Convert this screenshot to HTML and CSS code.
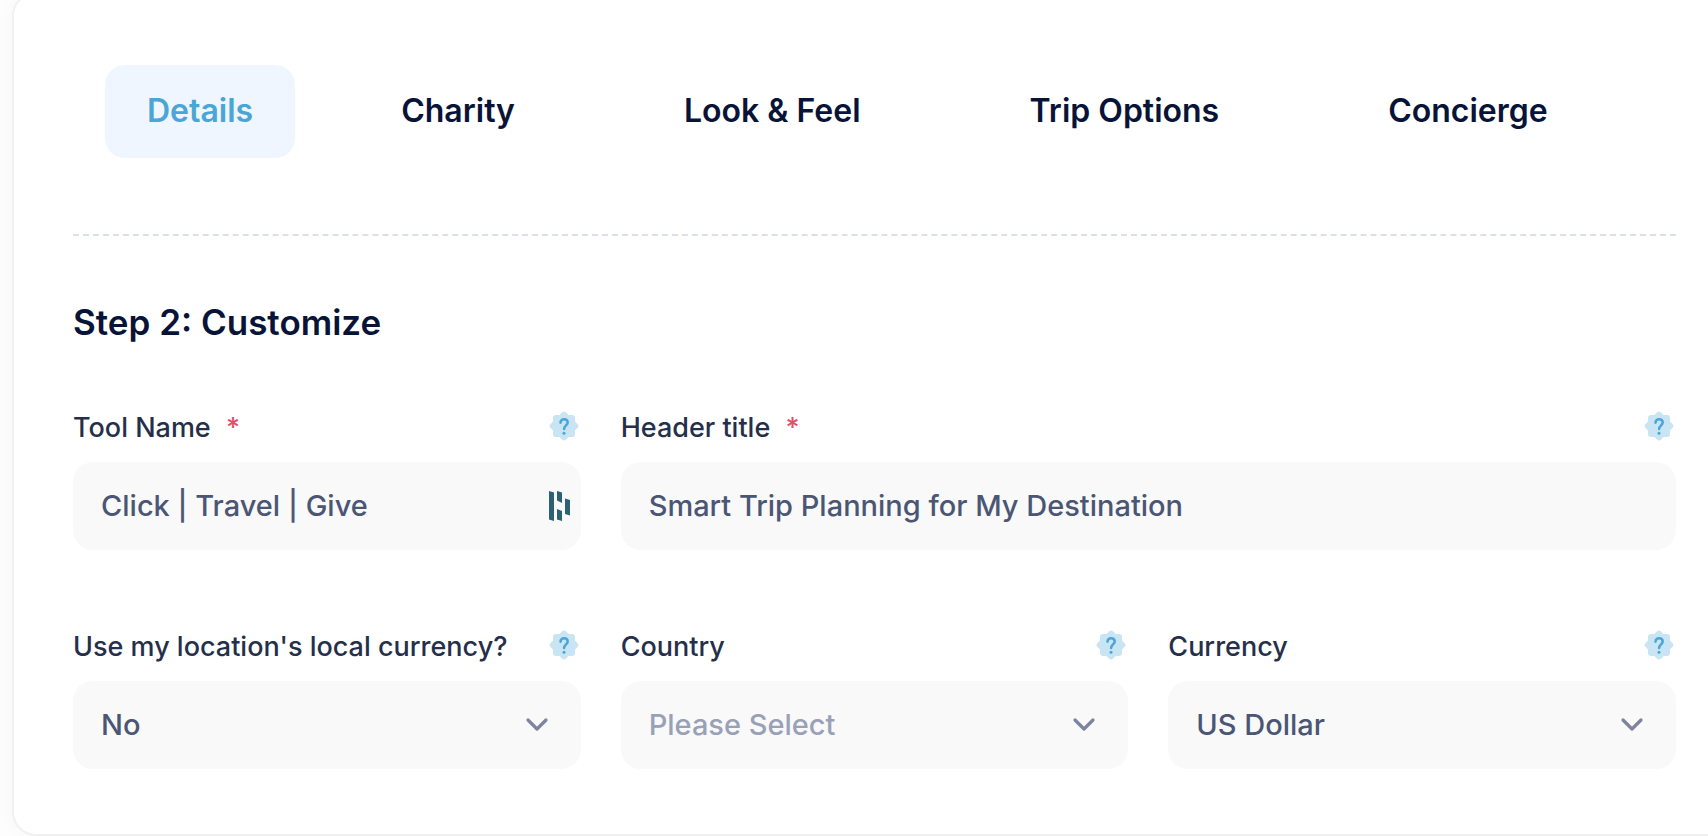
FILE: index.html
```html
<!DOCTYPE html>
<html lang="en">
<head>
<meta charset="utf-8">
<meta name="viewport" content="width=device-width, initial-scale=1">
<title>Step 2: Customize</title>
<link rel="stylesheet" href="styles.css">
</head>
<body>
<svg class="defs" aria-hidden="true">
  <symbol id="help" viewBox="0 0 30 30">
    <g fill="#c9e5f3">
      <rect x="4" y="4" width="22" height="22" rx="3"/>
      <rect x="4" y="4" width="22" height="22" rx="3" transform="rotate(45 15 15)"/>
    </g>
    <path d="M11.500 11.700c.2-2.200 1.600-3.500 3.600-3.500 2.100 0 3.600 1.400 3.600 3.300 0 2.800-3.600 3-3.600 6.500" fill="none" stroke="#4aa6d6" stroke-width="2.500" stroke-linecap="round"/>
    <circle cx="15" cy="22.300" r="1.500" fill="#4aa6d6"/>
  </symbol>
  <symbol id="chevron" viewBox="0 0 24 24">
    <path d="M3 7l9 9 9-9" fill="none" stroke="#7e84a0" stroke-width="3.200" stroke-linecap="round" stroke-linejoin="round"/>
  </symbol>
</svg>
<main class="card">
  <nav class="tabs">
    <a class="tab active" href="#details" aria-current="page">Details</a>
    <a class="tab" href="#charity">Charity</a>
    <a class="tab" href="#look">Look &amp; Feel</a>
    <a class="tab" href="#trip">Trip Options</a>
    <a class="tab" href="#concierge">Concierge</a>
  </nav>
  <form class="form">
    <h1 class="title">Step 2: Customize</h1>
    <div class="grid">
      <div class="field">
        <div class="head">
          <label for="tool">Tool Name <span class="required">*</span></label>
          <button class="help" type="button" aria-label="Help"><svg><use href="#help"/></svg></button>
        </div>
        <div class="box">
          <input class="control" id="tool" type="text" value="Click | Travel | Give">
          <svg class="filler" viewBox="0 0 22 30" aria-hidden="true">
            <path d="M0 0l5 1.500V30l-5-1.500zM8 0l5 1.500v10.500l-5-2.500zM8 18l5 2v10l-5-1.500zM16 7.500l5 1.500v15.500l-5-1.500z" fill="#2c6173"/>
          </svg>
        </div>
      </div>
      <div class="field wide">
        <div class="head">
          <label for="header">Header title <span class="required">*</span></label>
          <button class="help" type="button" aria-label="Help"><svg><use href="#help"/></svg></button>
        </div>
        <div class="box">
          <input class="control" id="header" type="text" value="Smart Trip Planning for My Destination">
        </div>
      </div>
      <div class="field">
        <div class="head">
          <label for="local">Use my location's local currency?</label>
          <button class="help" type="button" aria-label="Help"><svg><use href="#help"/></svg></button>
        </div>
        <div class="box">
          <select class="control" id="local"><option>No</option><option>Yes</option></select>
          <svg class="chevron" aria-hidden="true"><use href="#chevron"/></svg>
        </div>
      </div>
      <div class="field">
        <div class="head">
          <label for="country">Country</label>
          <button class="help" type="button" aria-label="Help"><svg><use href="#help"/></svg></button>
        </div>
        <div class="box">
          <select class="control empty" id="country"><option>Please Select</option></select>
          <svg class="chevron" aria-hidden="true"><use href="#chevron"/></svg>
        </div>
      </div>
      <div class="field">
        <div class="head">
          <label for="currency">Currency</label>
          <button class="help" type="button" aria-label="Help"><svg><use href="#help"/></svg></button>
        </div>
        <div class="box">
          <select class="control" id="currency"><option>US Dollar</option></select>
          <svg class="chevron" aria-hidden="true"><use href="#chevron"/></svg>
        </div>
      </div>
    </div>
  </form>
</main>
</body>
</html>
```

FILE: styles.css
```css
* {
  box-sizing: border-box;
}

body {
  margin: 0;
  overflow: hidden;
  background: #fdfdfd;
  font-family: Inter, "Liberation Sans", sans-serif;
  font-weight: 500;
}

.defs {
  position: absolute;
  width: 0;
  height: 0;
}

.card {
  margin: -8px -29px 0 12px;
  padding: 71px 59px 65px;
  border: 2px solid #f1f1f2;
  border-radius: 24px;
  background: #fff;
  box-shadow: 0 0 20px rgba(0, 0, 0, 0.03);
}

.tabs {
  display: flex;
  gap: 43px;
  padding: 0 32px 76px;
  border-bottom: 2px dashed #dbdfe9;
}

.tab {
  padding: 25px 63px 27px;
  border-radius: 20px;
  color: #071437;
  font-size: 32px;
  font-weight: 600;
  line-height: 41px;
  text-decoration: none;
  white-space: nowrap;
}

.tab.active {
  padding-right: 42px;
  padding-left: 42px;
  background: #eff6ff;
  color: #4aa6d6;
}

.title {
  margin: 62px 0 61px;
  color: #071437;
  font-size: 35px;
  font-weight: 600;
  line-height: 48px;
}

.grid {
  display: grid;
  grid-template-columns: repeat(3, minmax(0, 1fr));
  gap: 76px 40px;
}

.wide {
  grid-column: span 2;
}

.head {
  display: flex;
  align-items: center;
  justify-content: space-between;
  height: 40px;
  margin-bottom: 15px;
  padding-right: 2px;
  color: #252f4a;
  font-size: 27px;
}

.required {
  margin-left: 8px;
  color: #e0506e;
}

.help {
  display: flex;
  padding: 0 0 3px;
  border: 0;
  background: none;
}

.help svg {
  width: 30px;
  height: 30px;
}

.box {
  position: relative;
}

.control {
  display: block;
  width: 100%;
  height: 88px;
  padding: 0 28px 2px;
  border: 0;
  border-radius: 20px;
  outline: 0;
  background: #f9f9f9;
  color: #4b5675;
  font: inherit;
  font-size: 29px;
  appearance: none;
}

.control.empty {
  color: #99a1b7;
}

.filler {
  position: absolute;
  top: 29px;
  right: 10px;
  width: 22px;
  height: 30px;
}

.chevron {
  position: absolute;
  top: 32px;
  right: 32px;
  width: 24px;
  height: 24px;
  pointer-events: none;
}
```
